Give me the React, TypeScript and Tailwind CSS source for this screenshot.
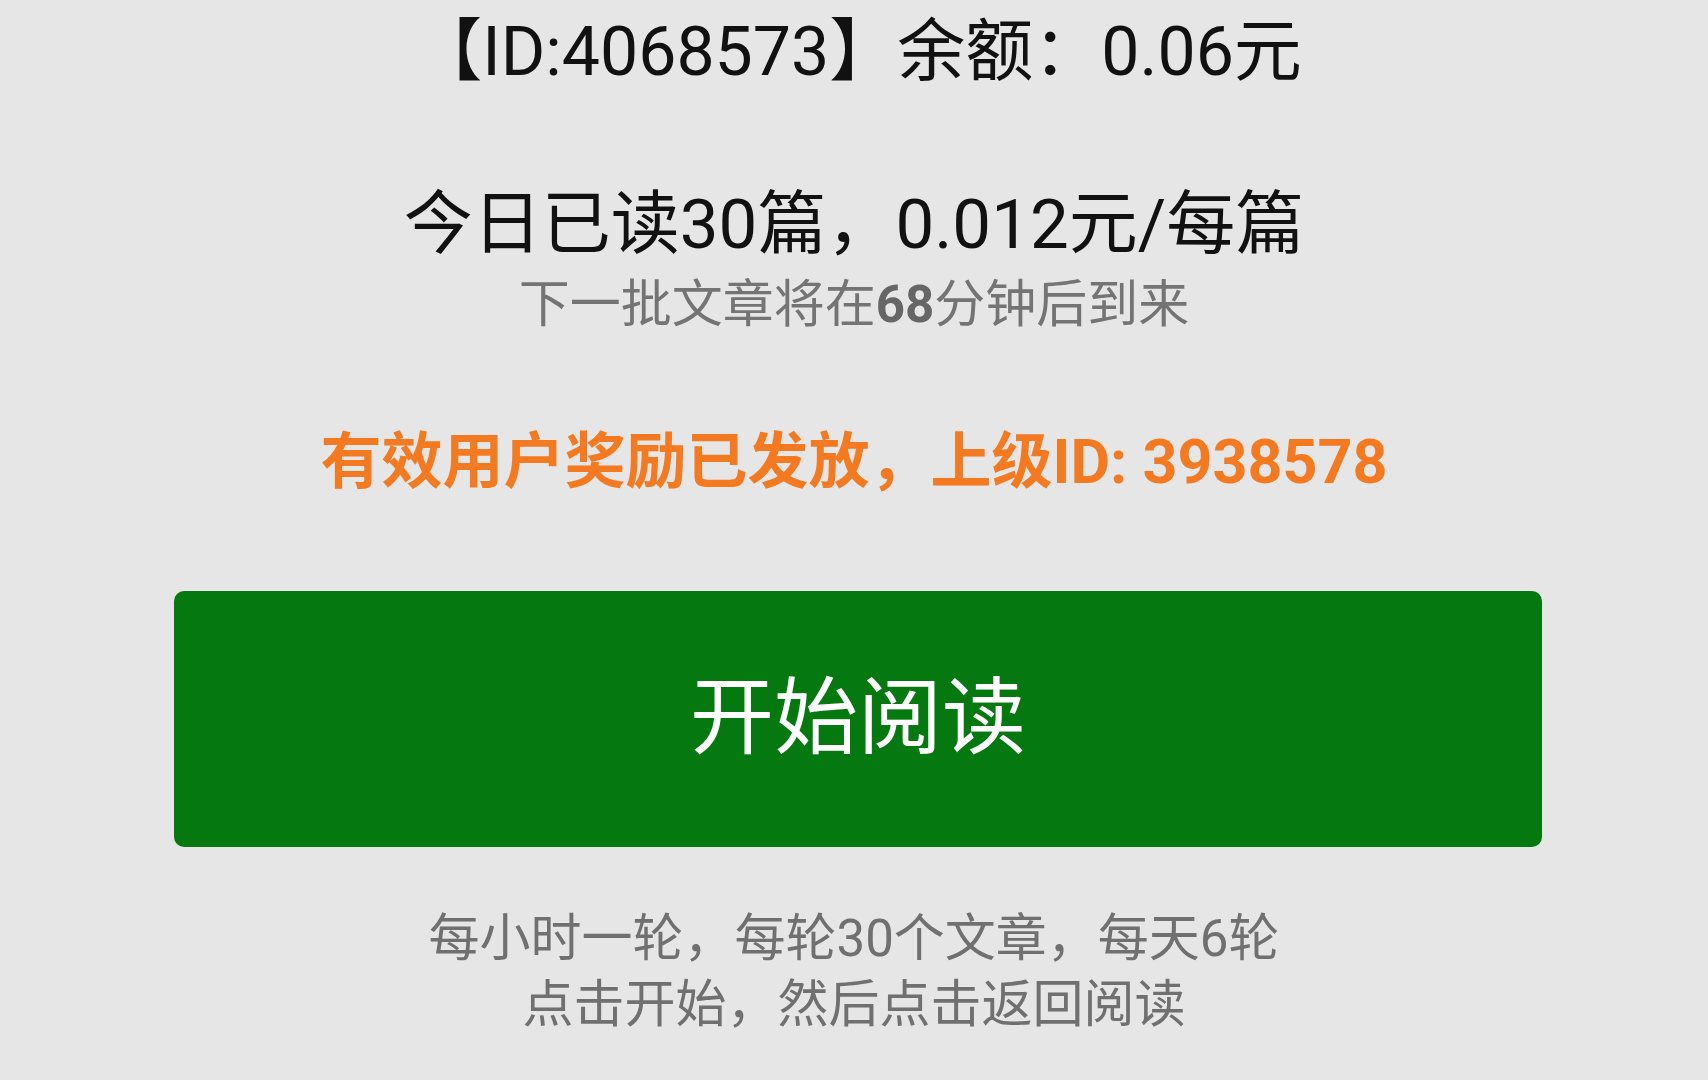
import React from 'react'

const font = { fontFamily: '"Roboto", "Noto Sans CJK SC", sans-serif' }

export default function App() {
  return (
    <div
      className="w-[1708px] h-[1080px] bg-[#e6e6e6] flex flex-col items-center overflow-hidden"
      style={font}
    >
      {/* Account line */}
      <div className="mt-[12px] pl-[8px] text-[68px] leading-[80px] text-[#111111] whitespace-nowrap">
        【ID:4068573】余额：0.06元
      </div>

      {/* Today's progress */}
      <div className="mt-[93px] text-[69px] leading-[80px] text-[#111111] whitespace-nowrap">
        今日已读30篇，0.012元/每篇
      </div>
      <div className="mt-[10px] text-[51px] leading-[60px] text-[#747474] whitespace-nowrap">
        下一批文章将在<span className="font-bold text-[#666666]">68</span>分钟后到来
      </div>

      {/* Reward notice */}
      <div className="mt-[87px] text-[61px] leading-[80px] font-bold text-[#f47a22] whitespace-nowrap">
        有效用户奖励已发放，上级ID: 3938578
      </div>

      {/* Start button */}
      <button className="mt-[89px] ml-[8px] w-[1368px] h-[256px] rounded-[10px] bg-[#05790f] flex items-center justify-center text-white text-[84px] leading-none">
        开始阅读
      </button>

      {/* Rules */}
      <div className="mt-[59px] flex flex-col items-center text-[51px] leading-[66px] text-[#707070] whitespace-nowrap">
        <span>每小时一轮，每轮30个文章，每天6轮</span>
        <span>点击开始，然后点击返回阅读</span>
      </div>
    </div>
  )
}
